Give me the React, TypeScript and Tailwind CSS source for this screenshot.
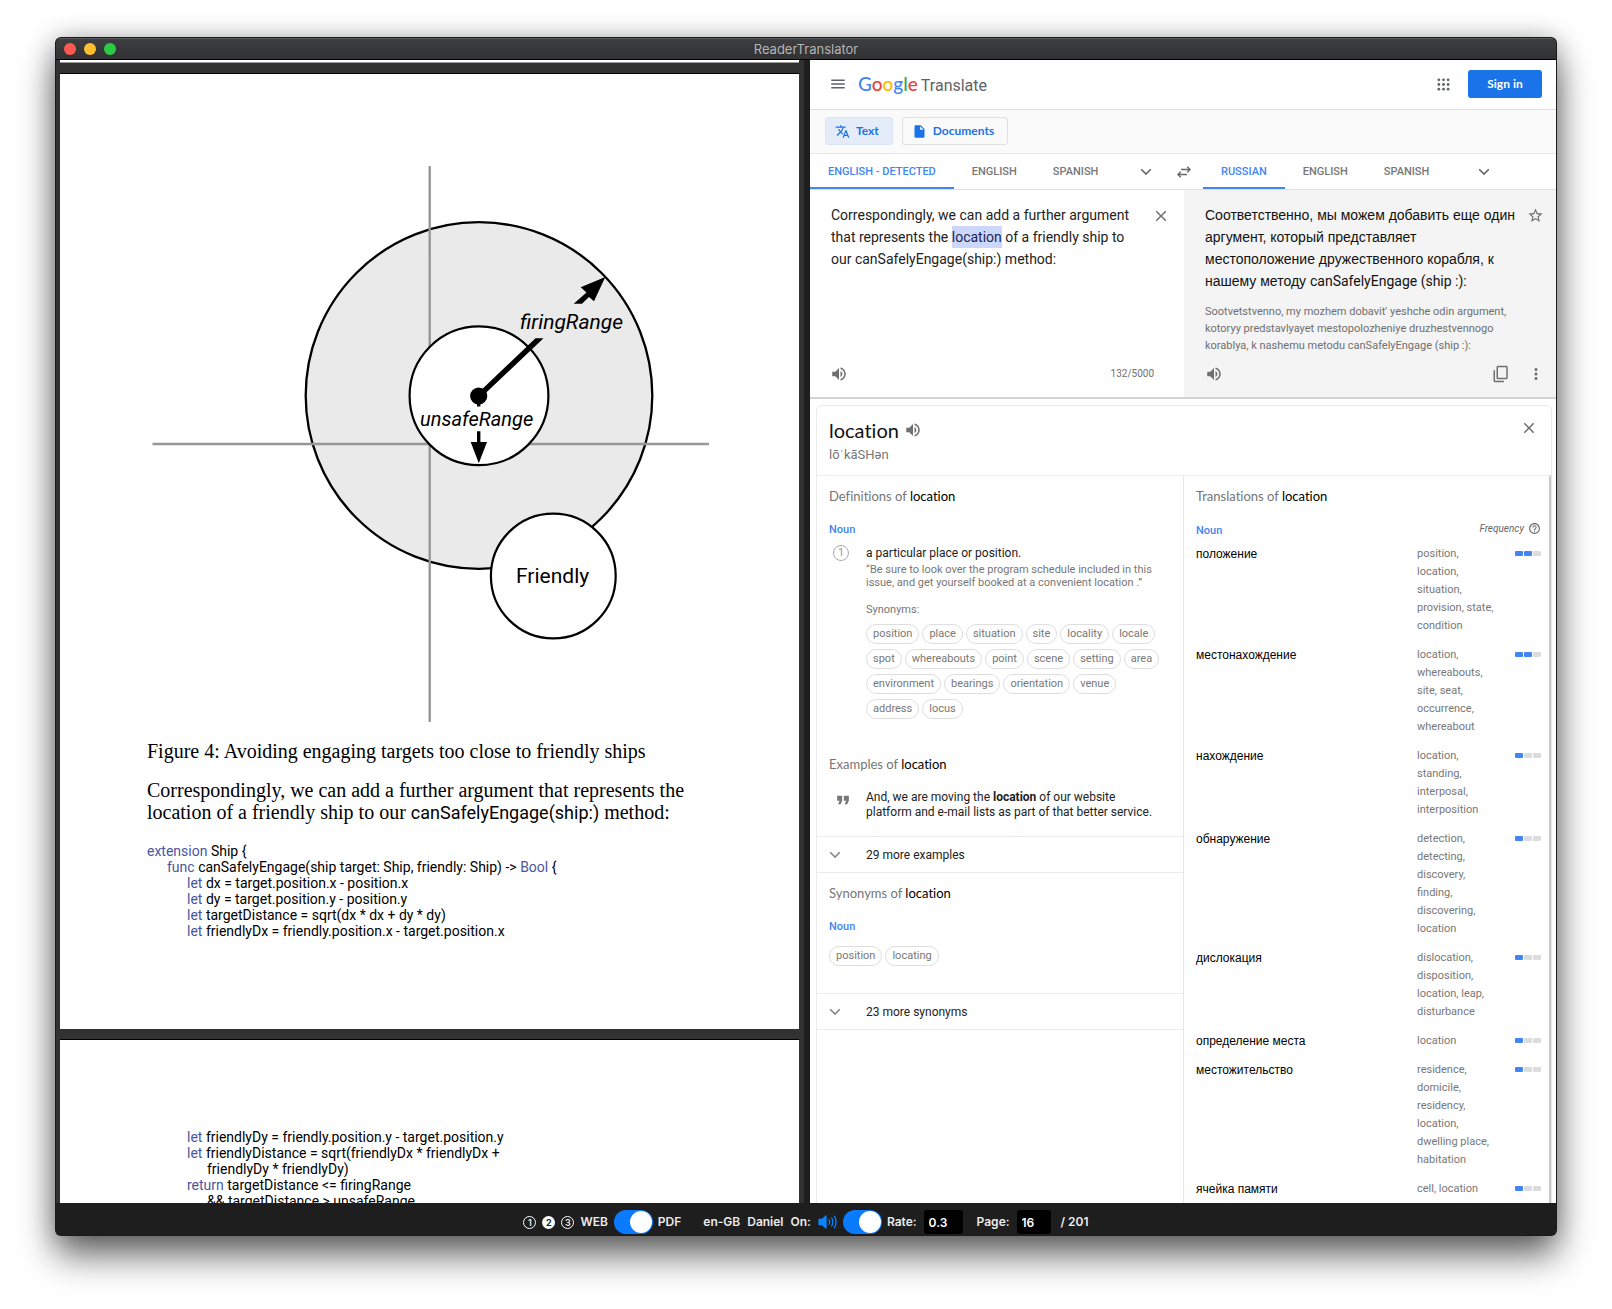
import { useEffect, useRef } from "react";
import type { ReactNode } from "react";
import {
  MdClose,
  MdContentCopy,
  MdFormatQuote,
  MdHelpOutline,
  MdInsertDriveFile,
  MdMenu,
  MdMoreVert,
  MdStarBorder,
  MdTranslate,
  MdVolumeUp,
} from "react-icons/md";

const SOURCE =
  "Correspondingly, we can add a further argument that represents the location of a friendly ship to our canSafelyEngage(ship:) method:";

const SYNONYMS = [
  "position", "place", "situation", "site", "locality", "locale", "spot", "whereabouts", "point",
  "scene", "setting", "area", "environment", "bearings", "orientation", "venue", "address", "locus",
];

const TRANSLATIONS = [
  { word: "положение", back: "position, location, situation, provision, state, condition", freq: 2 },
  { word: "местонахождение", back: "location, whereabouts, site, seat, occurrence, whereabout", freq: 2 },
  { word: "нахождение", back: "location, standing, interposal, interposition", freq: 1 },
  { word: "обнаружение", back: "detection, detecting, discovery, finding, discovering, location", freq: 1 },
  { word: "дислокация", back: "dislocation, disposition, location, leap, disturbance", freq: 1 },
  { word: "определение места", back: "location", freq: 1 },
  { word: "местожительство", back: "residence, domicile, residency, location, dwelling place, habitation", freq: 1 },
  { word: "ячейка памяти", back: "cell, location", freq: 1 },
];

function Kw({ children }: { children: ReactNode }) {
  return <span className="text-[#4a55a0]">{children}</span>;
}

function RangeFigure() {
  return (
    <svg viewBox="60 74 739 656" className="block w-full" role="img" aria-label="Firing range and unsafe range around a ship, with a friendly ship nearby">
      <circle cx="479" cy="395.5" r="173.3" fill="#eaeaea" stroke="#000" strokeWidth="2.3" />
      <path d="M429.7 166V722M152.5 444H709" stroke="#979797" strokeWidth="2.4" />
      <circle cx="479" cy="395.8" r="69.4" fill="#fff" stroke="#000" strokeWidth="2.2" />
      <circle cx="553.3" cy="576" r="62.4" fill="#fff" stroke="#000" strokeWidth="2.2" />
      <circle cx="478.7" cy="396" r="8.6" />
      <path d="M477 394L535.5 338.3H543.5L481 397.5Z" />
      <path d="M605.3 277L580.7 287.3L586.5 292.5L573.7 303.7H582L589 297L594 301.3Z" />
      <path d="M477 396H480.4V406.5H477ZM477 431.3H480.4V442H487L478.8 463.3L470.7 442H477Z" />
      <text x="520" y="329" className="font-['Roboto'] text-[21px] italic">firingRange</text>
      <text x="420" y="426" className="font-['Roboto'] text-[20px] italic">unsafeRange</text>
      <text x="516" y="583" className="font-['Roboto'] text-[21px]">Friendly</text>
    </svg>
  );
}

function PdfPane() {
  return (
    <section aria-label="PDF" className="flex min-h-0 flex-col overflow-hidden bg-[#323232] pl-1 pr-[5px] text-black">
      <div className="h-[3px] shrink-0 border-b border-[#9a9a9a] bg-white" />
      <article className="mt-[11px] shrink-0 bg-white pb-[90px] shadow-[0_-1px_0_#000]">
        <RangeFigure />
        <div className="px-[87px]">
          <p className="mt-[10px] whitespace-nowrap font-['Liberation_Serif',serif] text-[20px] leading-[22px]">
            Figure 4: Avoiding engaging targets too close to friendly ships
          </p>
          <p className="mt-[17px] whitespace-nowrap font-['Liberation_Serif',serif] text-[20px] leading-[22px]">
            Correspondingly, we can add a further argument that represents the
            <br />
            location of a friendly ship to our{" "}
            <span className="font-['Roboto'] text-[18px]">canSafelyEngage(ship:)</span> method:
          </p>
          <div className="mt-[19px] whitespace-nowrap font-['Roboto'] text-[14px] leading-4">
            <p><Kw>extension</Kw> Ship {"{"}</p>
            <p className="pl-5"><Kw>func</Kw> canSafelyEngage(ship target: Ship, friendly: Ship) -&gt; <Kw>Bool</Kw> {"{"}</p>
            <div className="pl-10">
              <p><Kw>let</Kw> dx = target.position.x - position.x</p>
              <p><Kw>let</Kw> dy = target.position.y - position.y</p>
              <p><Kw>let</Kw> targetDistance = sqrt(dx * dx + dy * dy)</p>
              <p><Kw>let</Kw> friendlyDx = friendly.position.x - target.position.x</p>
            </div>
          </div>
        </div>
      </article>
      <article className="mt-[11px] shrink-0 bg-white px-[87px] pt-[89px] shadow-[0_-1px_0_#000]">
        <div className="whitespace-nowrap pl-10 font-['Roboto'] text-[14px] leading-4">
          <p><Kw>let</Kw> friendlyDy = friendly.position.y - target.position.y</p>
          <p><Kw>let</Kw> friendlyDistance = sqrt(friendlyDx * friendlyDx +</p>
          <p className="pl-5">friendlyDy * friendlyDy)</p>
          <p><Kw>return</Kw> targetDistance &lt;= firingRange</p>
          <p className="pl-5">&amp;&amp; targetDistance &gt; unsafeRange</p>
        </div>
      </article>
    </section>
  );
}

function AppsIcon() {
  return (
    <svg viewBox="0 0 14 14" className="size-[13px]" fill="#5f6368">
      {[2, 7, 12].map((y) => [2, 7, 12].map((x) => <circle key={`${x}-${y}`} cx={x} cy={y} r="1.5" />))}
    </svg>
  );
}

function SwapIcon() {
  return (
    <svg viewBox="0 0 14 12" className="h-3 w-[14px]" fill="none" stroke="#666" strokeWidth="1.4">
      <path d="M4 3.5H13M10.3 0.8L13 3.5L10.3 6.2M10 8.5H1M3.7 5.8L1 8.5L3.7 11.2" />
    </svg>
  );
}

function Chevron() {
  return (
    <svg viewBox="0 0 12 8" className="h-2 w-3" fill="none" stroke="currentColor" strokeWidth="1.6">
      <path d="M1.2 1.3L6 6.1L10.8 1.3" />
    </svg>
  );
}

function Header() {
  return (
    <header className="flex h-[50px] shrink-0 items-center border-b border-[#e0e0e0] bg-white pb-px pl-[19px] pr-[14px]">
      <button aria-label="Main menu" className="mr-[11px] text-[#5f6368]"><MdMenu size={18} /></button>
      <a href="#home" className="flex items-baseline gap-[3px] pt-px font-['Lato',sans-serif] text-[19px] font-medium leading-6" aria-label="Google Translate">
        <span>
          <span className="text-[#4285f4]">G</span>
          <span className="text-[#ea4335]">o</span>
          <span className="text-[#fbbc05]">o</span>
          <span className="text-[#4285f4]">g</span>
          <span className="text-[#34a853]">l</span>
          <span className="text-[#ea4335]">e</span>
        </span>
        <span className="font-['Roboto'] text-[16px] font-normal text-[#5f6368]">Translate</span>
      </a>
      <button aria-label="Google apps" className="ml-auto mr-[18px]"><AppsIcon /></button>
      <button className="h-7 w-[74px] rounded-[3px] bg-[#1a73e8] font-['Lato',sans-serif] text-[12px] font-bold text-white">Sign in</button>
    </header>
  );
}

function ModeBar() {
  return (
    <div className="flex h-11 shrink-0 items-center gap-[9px] border-b border-[#e8e8e8] bg-[#fafafa] px-[15px] pb-px font-['Lato',sans-serif] text-[12px] font-bold text-[#1a73e8]">
      <button className="flex h-7 items-center gap-[6px] rounded-[3px] border border-[#d9e4f8] bg-[#e4ecfa] pl-[9px] pr-[13px]">
        <MdTranslate size={15} /> Text
      </button>
      <button className="flex h-7 items-center gap-[6px] rounded-[3px] border border-[#e0e0e0] pl-[9px] pr-[13px]">
        <MdInsertDriveFile size={15} /> Documents
      </button>
    </div>
  );
}

function Tab({ children, active = false }: { children: ReactNode; active?: boolean }) {
  return (
    <button
      role="tab"
      aria-selected={active}
      className={
        active
          ? "h-full border-b-2 border-[#4285f4] px-[18px] pt-1 text-[#4285f4]"
          : "h-full border-b-2 border-transparent px-[18px] pt-1 text-[#777]"
      }
    >
      {children}
    </button>
  );
}

function LanguageBar() {
  return (
    <div className="grid h-9 shrink-0 grid-cols-[374fr_372fr] border-b border-[#e0e0e0] bg-white font-['Roboto'] text-[11px] font-medium">
      <div className="flex items-center" role="tablist" aria-label="Source language">
        <Tab active>ENGLISH - DETECTED</Tab>
        <Tab>ENGLISH</Tab>
        <Tab>SPANISH</Tab>
        <button aria-label="More source languages" className="ml-auto mr-8 text-[#666]"><Chevron /></button>
      </div>
      <div className="flex items-center" role="tablist" aria-label="Target language">
        <button aria-label="Swap languages" className="-ml-[7px] mr-3"><SwapIcon /></button>
        <Tab active>RUSSIAN</Tab>
        <Tab>ENGLISH</Tab>
        <Tab>SPANISH</Tab>
        <button aria-label="More target languages" className="ml-auto mr-[66px] text-[#666]"><Chevron /></button>
      </div>
    </div>
  );
}

function TextPanels() {
  const source = useRef<HTMLTextAreaElement>(null);
  useEffect(() => {
    const start = SOURCE.indexOf("location");
    source.current?.focus({ preventScroll: true });
    source.current?.setSelectionRange(start, start + "location".length);
  }, []);
  return (
    <div className="grid h-[209px] shrink-0 grid-cols-[374fr_372fr] border-b-2 border-[#d4d4d4] bg-white font-['Roboto'] text-[#6f6f6f]">
      <div className="flex flex-col">
        <div className="flex flex-1 items-start justify-between pl-[21px] pr-[14px] pt-[14px]">
          <textarea
            ref={source}
            aria-label="Source text"
            defaultValue={SOURCE}
            spellCheck={false}
            className="h-[132px] w-[306px] resize-none overflow-hidden bg-transparent text-[14px] leading-[22px] text-[#222] outline-none selection:bg-[#ccd7fb] selection:text-[#1c2450]"
          />
          <button aria-label="Clear source text" className="mt-[3px]"><MdClose size={18} /></button>
        </div>
        <div className="flex h-[43px] items-center justify-between pb-1 pl-5 pr-[30px] text-[10px]">
          <button aria-label="Listen to source text"><MdVolumeUp size={18} /></button>
          <span>132/5000</span>
        </div>
      </div>
      <div className="flex flex-col bg-[#f4f4f4]">
        <div className="flex flex-1 items-start justify-between pl-[21px] pr-3 pt-[14px]">
          <div className="w-[316px]">
            <p className="font-['Liberation_Sans',sans-serif] text-[14px] leading-[22px] text-[#111]">
              Соответственно, мы можем добавить еще один аргумент, который представляет местоположение дружественного корабля, к нашему методу <span className="font-['Roboto']">canSafelyEngage (ship :):</span>
            </p>
            <p className="mt-[11px] text-[11px] leading-[17px]">
              Sootvetstvenno, my mozhem dobavit' yeshche odin argument, kotoryy predstavlyayet mestopolozheniye druzhestvennogo korablya, k nashemu metodu canSafelyEngage (ship :):
            </p>
          </div>
          <button aria-label="Save translation" className="mt-[3px]"><MdStarBorder size={17} /></button>
        </div>
        <div className="flex h-[43px] items-center pb-[3px] pl-[21px] pr-[11px]">
          <button aria-label="Listen to translation"><MdVolumeUp size={18} /></button>
          <button aria-label="Copy translation" className="ml-auto mr-[17px]"><MdContentCopy size={18} className="-scale-x-100 rotate-180" /></button>
          <button aria-label="More options"><MdMoreVert size={18} /></button>
        </div>
      </div>
    </div>
  );
}

function SectionTitle({ children }: { children: ReactNode }) {
  return (
    <h2 className="font-['Lato',sans-serif] text-[13px] leading-5 text-[#757575] [font-variant-ligatures:none]">
      {children} <span className="text-black">location</span>
    </h2>
  );
}

function Noun() {
  return <h3 className="text-[11px] font-medium leading-4 text-[#4285f4]">Noun</h3>;
}

function Chip({ children }: { children: ReactNode }) {
  return (
    <button className="h-5 rounded-full border border-[#dedede] px-[6px] text-[11px] leading-[18px] text-[#777]">{children}</button>
  );
}

function MoreRow({ children }: { children: ReactNode }) {
  return (
    <button className="flex h-[37px] w-full items-center gap-[25px] border-y border-[#ebebeb] pl-3 text-left text-[12px] text-[#222]">
      <span className="text-[#888]"><Chevron /></span>
      {children}
    </button>
  );
}

function Definitions() {
  return (
    <div className="border-r border-[#e6e6e6]">
      <div className="px-3 pt-[10px]">
        <SectionTitle>Definitions of</SectionTitle>
        <div className="mt-4"><Noun /></div>
        <div className="mt-[7px] flex gap-[17px]">
          <span className="ml-1 flex size-4 shrink-0 items-center justify-center rounded-full border border-[#aaa] text-[11px] text-[#999]">1</span>
          <div className="w-[298px]">
            <p className="text-[12px] leading-4 text-[#222]">a particular place or position.</p>
            <p className="mt-[2px] whitespace-nowrap text-[11px] leading-[13px] text-[#777]">
              “Be sure to look over the program schedule included in this
              <br />
              issue, and get yourself booked at a convenient location .”
            </p>
            <p className="mt-[13px] text-[11px] leading-4 text-[#777]">Synonyms:</p>
            <div className="mt-[6px] flex flex-wrap gap-x-[3px] gap-y-[5px]">
              {SYNONYMS.map((s) => <Chip key={s}>{s}</Chip>)}
            </div>
          </div>
        </div>
        <div className="mt-[35px]"><SectionTitle>Examples of</SectionTitle></div>
        <div className="mb-4 mt-4 flex gap-[17px]">
          <MdFormatQuote size={20} className="ml-1 mr-[-4px] shrink-0 text-[#777]" />
          <p className="whitespace-nowrap text-[12px] leading-[15px] text-[#222]">
            And, we are moving the <b>location</b> of our website
            <br />
            platform and e-mail lists as part of that better service.
          </p>
        </div>
      </div>
      <MoreRow>29 more examples</MoreRow>
      <div className="px-3 pb-[27px] pt-[10px]">
        <SectionTitle>Synonyms of</SectionTitle>
        <div className="mt-4"><Noun /></div>
        <div className="mt-[11px] flex gap-[3px]">
          <Chip>position</Chip>
          <Chip>locating</Chip>
        </div>
      </div>
      <MoreRow>23 more synonyms</MoreRow>
    </div>
  );
}

function Frequency({ level }: { level: number }) {
  return (
    <span role="img" aria-label={`Frequency ${level} of 3`} className="flex justify-end gap-px pt-[6px]">
      {[1, 2, 3].map((n) => (
        <span key={n} className={n <= level ? "h-[5px] w-2 rounded-[1px] bg-[#4285f4]" : "h-[5px] w-2 rounded-[1px] bg-[#dadce0]"} />
      ))}
    </span>
  );
}

function Translations() {
  return (
    <div className="border-r-2 border-[#c8c8c8] pl-3 pr-2 pt-[10px]">
      <SectionTitle>Translations of</SectionTitle>
      <div className="mt-[13px] flex h-[21px] justify-between">
        <div className="pt-1"><Noun /></div>
        <div className="flex items-center gap-1 pb-[3px] text-[10px] italic text-[#666]">
          Frequency
          <button aria-label="About frequency"><MdHelpOutline size={13} /></button>
        </div>
      </div>
      <table className="mt-[5px] w-full">
        <tbody>
          {TRANSLATIONS.map((t) => (
            <tr key={t.word} className="align-top">
              <th scope="row" className="pb-[11px] text-left font-['Liberation_Sans',sans-serif] text-[12px] font-normal leading-[18px] text-black">{t.word}</th>
              <td className="w-[80px] pb-[11px] text-[11px] leading-[18px] text-[#777]">{t.back}</td>
              <td className="w-[44px]"><Frequency level={t.freq} /></td>
            </tr>
          ))}
        </tbody>
      </table>
    </div>
  );
}

function DictionaryCard() {
  return (
    <div className="mx-[6px] mr-1 mt-[6px] flex min-h-0 flex-1 flex-col overflow-hidden rounded-t-md border border-b-0 border-[#ebebeb] bg-white font-['Roboto']">
      <div className="flex h-[70px] shrink-0 items-start justify-between border-b border-[#ececec] pl-3 pr-[13px]">
        <div>
          <h1 className="mt-[10px] flex items-center gap-[5px] font-['Lato',sans-serif] text-[20px] leading-7 text-[#111] [font-variant-ligatures:none]">
            location
            <button aria-label="Listen to location" className="text-[#6f6f6f]"><MdVolumeUp size={18} /></button>
          </h1>
          <p className="mt-[3px] text-[13px] leading-4 text-[#777]">lōˈkāSHən</p>
        </div>
        <button aria-label="Close details" className="mt-[13px] text-[#6f6f6f]"><MdClose size={18} /></button>
      </div>
      <div className="grid min-h-0 flex-1 grid-cols-[367fr_367fr]">
        <Definitions />
        <Translations />
      </div>
    </div>
  );
}

function Toggle({ label, id }: { label: string; id: string }) {
  return (
    <input
      type="checkbox"
      role="switch"
      id={id}
      aria-label={label}
      defaultChecked
      className="h-6 w-[39px] appearance-none rounded-full bg-[#0a7aff] before:ml-4 before:mt-px before:block before:size-[22px] before:rounded-full before:bg-white not-checked:bg-[#555] not-checked:before:ml-px"
    />
  );
}

function SpeakerWaves() {
  return (
    <svg viewBox="0 0 20 16" className="h-4 w-5" fill="none" stroke="#0a84ff" strokeWidth="1.3" strokeLinecap="round">
      <path d="M1 5.5H4L8 2V14L4 10.5H1Z" fill="#0a84ff" strokeLinejoin="round" />
      <path d="M11 5.7Q12.3 8 11 10.3M13.7 4Q16 8 13.7 12M16.4 2.2Q19.8 8 16.4 13.8" />
    </svg>
  );
}

function StatusBar() {
  const round = "flex size-[13px] items-center justify-center rounded-full border border-white text-[9px] font-semibold leading-none";
  return (
    <footer className="flex h-8 shrink-0 items-center justify-center overflow-hidden bg-[#1e1e1e] pt-[6px] font-['Inter',sans-serif] text-[12px] font-semibold text-[#ececec]">
      <div className="flex items-center gap-[6px]">
        <button className={round}>1</button>
        <button className="flex size-[13px] items-center justify-center rounded-full bg-white text-[9px] font-bold leading-none text-[#1e1e1e]">2</button>
        <button className={round}>3</button>
      </div>
      <label htmlFor="source-kind" className="mx-[6px]">WEB</label>
      <Toggle id="source-kind" label="Show PDF instead of WEB" />
      <span className="ml-[5px]">PDF</span>
      <button className="ml-[22px]">en-GB</button>
      <button className="ml-[7px]">Daniel</button>
      <label htmlFor="voice-on" className="mx-[7px]">On:</label>
      <SpeakerWaves />
      <span className="ml-[5px] flex"><Toggle id="voice-on" label="Voice on" /></span>
      <label htmlFor="rate" className="ml-[5px]">Rate:</label>
      <input id="rate" defaultValue="0.3" className="ml-[7px] h-6 w-[39px] rounded-[3px] bg-black pl-[5px] text-white" />
      <label htmlFor="page" className="ml-[14px]">Page:</label>
      <input id="page" defaultValue="16" className="ml-[7px] h-6 w-[34px] rounded-[3px] bg-black pl-[5px] text-white" />
      <span className="ml-[10px]">/ 201</span>
    </footer>
  );
}

export default function App() {
  return (
    <div className="flex h-screen bg-white px-14 pb-[74px] pt-[38px]">
      <main className="flex min-w-0 flex-1 flex-col overflow-hidden rounded-[5px] bg-[#1e1e1e] shadow-[0_0_0_1px_#1a1a1a,0_20px_36px_rgba(0,0,0,0.6),0_0_26px_rgba(0,0,0,0.25)]">
        <div className="grid h-[22px] shrink-0 grid-cols-[1fr_auto_1fr] items-center border-b border-t border-b-black border-t-[#5c5c5e] bg-linear-to-b from-[#3d3e40] to-[#323234] px-2">
          <div className="flex gap-2">
            <button aria-label="Close" className="size-3 rounded-full bg-[#ff5850]" />
            <button aria-label="Minimise" className="size-3 rounded-full bg-[#ffbf2f]" />
            <button aria-label="Zoom" className="size-3 rounded-full bg-[#29cc42]" />
          </div>
          <h1 className="font-['Inter',sans-serif] text-[13px] leading-5 text-[#b4b4b5]">ReaderTranslator</h1>
        </div>
        <div className="grid min-h-0 flex-1 grid-cols-[748fr_6px_746fr] grid-rows-[minmax(0,1fr)]">
          <PdfPane />
          <div className="bg-[#1e1e1e]" />
          <section aria-label="Translator" className="flex min-h-0 flex-col overflow-hidden bg-white">
            <Header />
            <ModeBar />
            <LanguageBar />
            <TextPanels />
            <DictionaryCard />
          </section>
        </div>
        <StatusBar />
      </main>
    </div>
  );
}
